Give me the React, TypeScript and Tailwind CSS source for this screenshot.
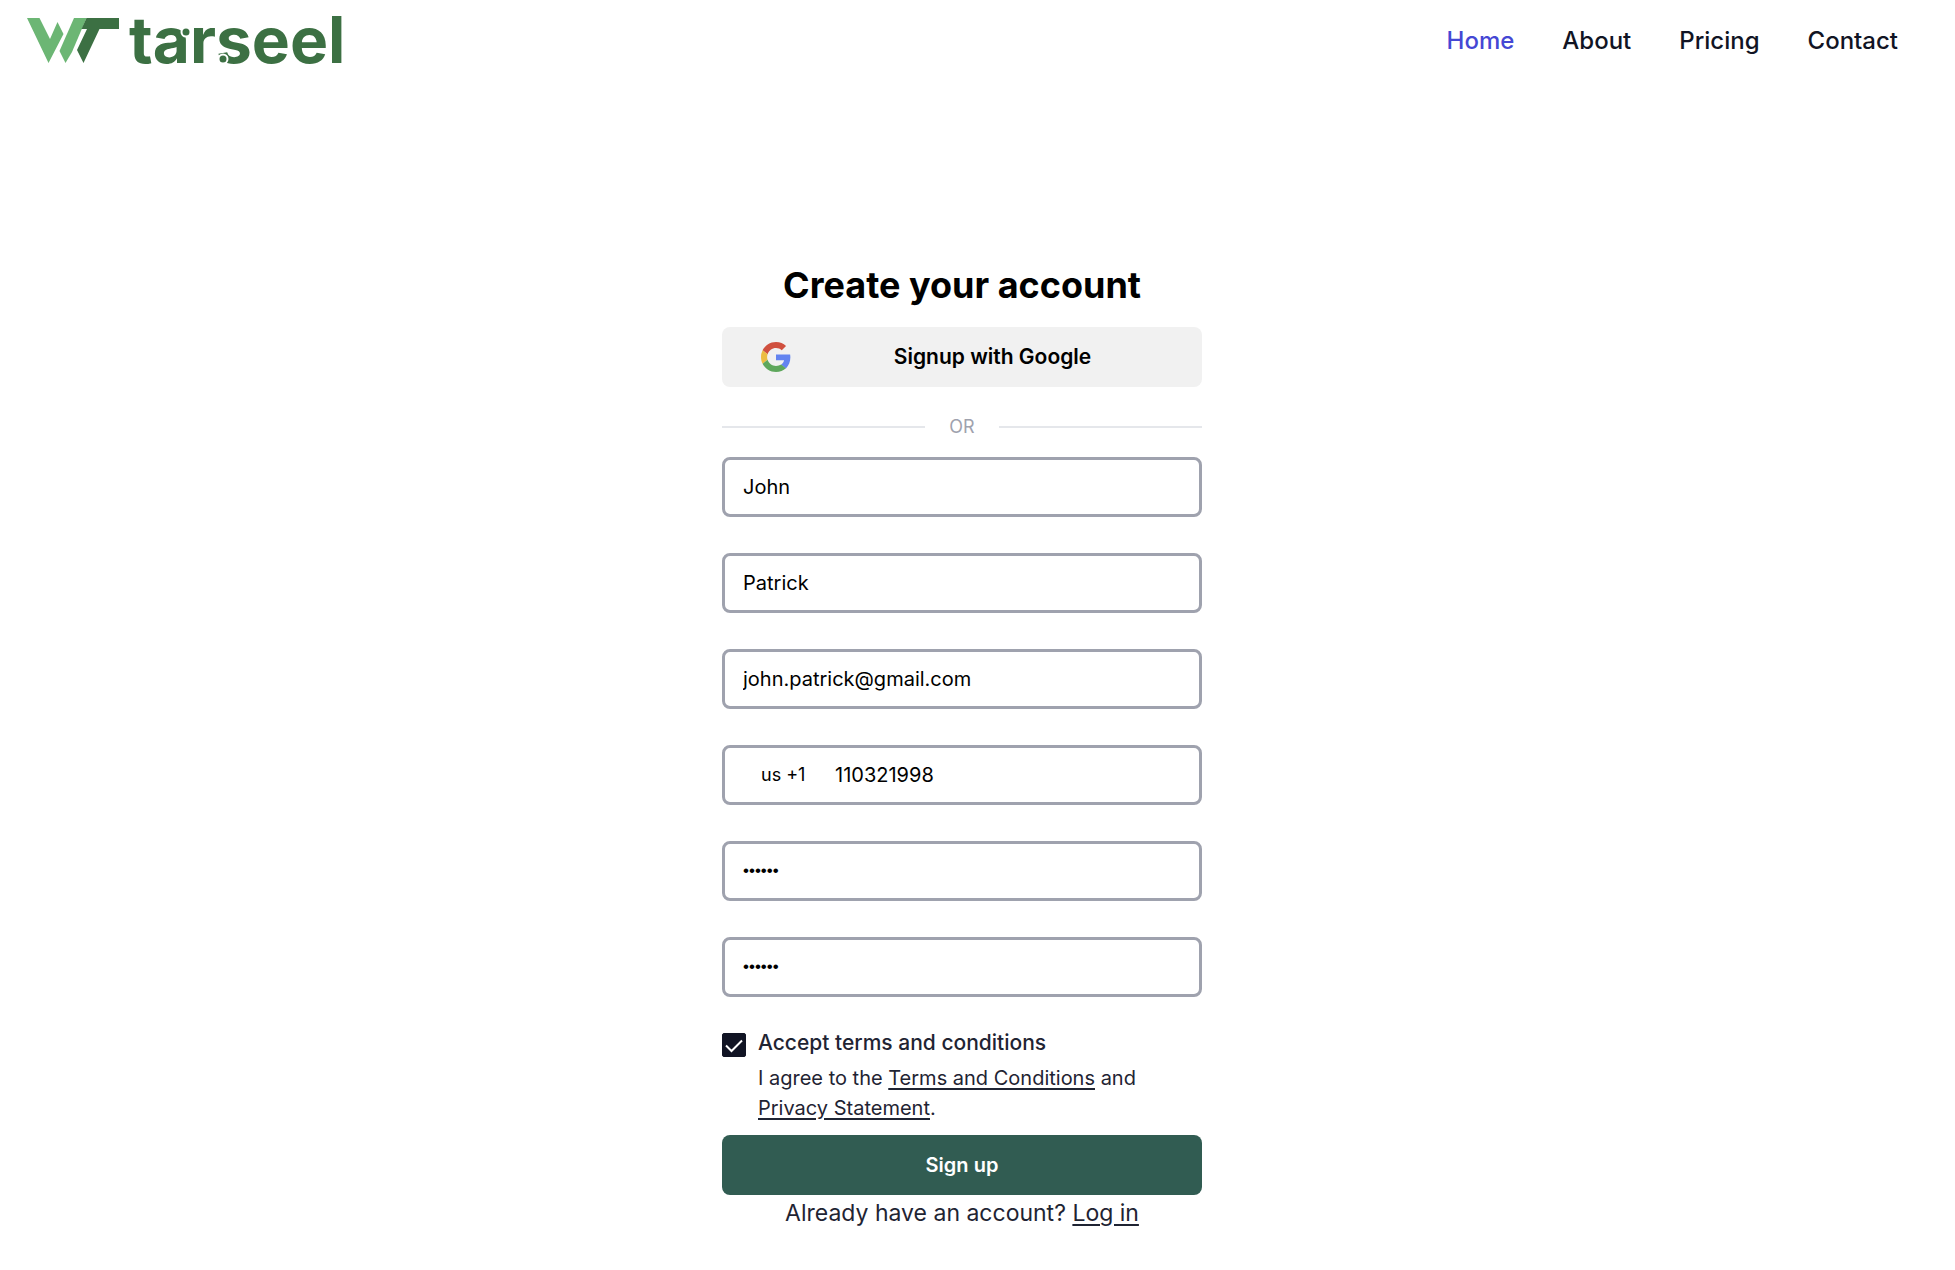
import { useState } from "react";
import type { ComponentProps, ReactNode } from "react";

const NAV = ["Home", "About", "Pricing", "Contact"];

const FIELD_BOX = "h-[60px] w-full rounded-lg border-3 border-[#9fa2ae] bg-white text-black";
const LINK = "underline decoration-2 underline-offset-3";

function Logo() {
  return (
    <svg viewBox="0 -18 330 82" className="h-[82px] w-[330px]" role="img" aria-label="tarseel">
      <path fill="#6cb674" d="M0 0h12.500l10.500 21 7.500-17 6 12L21.500 45z" />
      <path fill="#6cb674" d="M47 0h12.500L45 34l-6.500 11-6-12z" />
      <path fill="#3c7043" d="M59.500 0H92v11H72.500L56.500 45 50 32 60 11h-5.500z" />
      <text x="102" y="45" fill="#3c7043" className="font-[Inter] text-[64px] font-bold">
        tarseel
      </text>
      <circle cx="159" cy="14" r="4.500" fill="#3c7043" stroke="#fff" strokeWidth="2" />
      <circle cx="196" cy="41" r="4.500" fill="#3c7043" stroke="#fff" strokeWidth="2" />
    </svg>
  );
}

function GoogleMark() {
  return (
    <svg viewBox="0 0 48 48" className="size-[30px]" aria-hidden="true">
      <path fill="#d0503f" d="M24 9.500c3.540 0 6.710 1.220 9.210 3.600l6.850-6.850C35.900 2.380 30.470 0 24 0 14.620 0 6.510 5.380 2.560 13.220l7.980 6.190C12.430 13.720 17.740 9.500 24 9.500z" />
      <path fill="#6384f0" d="M46.980 24.550c0-1.570-.15-3.090-.38-4.550H24v9.020h12.940c-.58 2.960-2.260 5.480-4.780 7.180l7.730 6c4.510-4.180 7.090-10.360 7.090-17.650z" />
      <path fill="#ecbd41" d="M10.530 28.590A14.500 14.500 0 0 1 9.770 24c0-1.600.27-3.140.76-4.590l-7.980-6.190A23.900 23.900 0 0 0 0 24c0 3.880.92 7.540 2.560 10.780z" />
      <path fill="#5ea75c" d="M24 48c6.480 0 11.930-2.130 15.890-5.810l-7.730-6c-2.150 1.450-4.920 2.300-8.160 2.300-6.260 0-11.570-4.220-13.470-9.910l-7.980 6.190C6.510 42.620 14.620 48 24 48z" />
    </svg>
  );
}

function Field({ label, ...props }: { label: string } & ComponentProps<"input">) {
  const text = props.type === "password" ? "font-[Liberation_Sans] text-[17px]" : "text-xl";
  return <input {...props} aria-label={label} className={`${FIELD_BOX} px-[18px] ${text}`} />;
}

function Divider({ children }: { children: ReactNode }) {
  return (
    <div className="mt-[25px] mb-[15px] flex h-[30px] items-center gap-6 text-lg text-[#9fa2ae]">
      <span className="h-0.5 flex-1 bg-gray-200" />
      {children}
      <span className="h-0.5 flex-1 bg-gray-200" />
    </div>
  );
}

export default function App() {
  const [accepted, setAccepted] = useState(true);

  return (
    <div className="bg-white pr-[31px] font-[Inter,sans-serif] text-[#1f2433]">
      <header className="flex items-center justify-between pr-[26px] pl-[27px]">
        <a href="#home">
          <Logo />
        </a>
        <nav className="flex gap-12 text-2xl font-medium text-[#111424]">
          {NAV.map((item) => (
            <a key={item} href={`#${item.toLowerCase()}`} className={item === "Home" ? "text-[#4547d4]" : ""}>
              {item}
            </a>
          ))}
        </nav>
      </header>

      <main className="mx-auto mt-[179px] w-full max-w-[480px]">
        <h1 className="mb-[18px] text-center text-4xl leading-12 font-bold text-black">Create your account</h1>

        <button type="button" className="grid h-[60px] w-full grid-cols-[30px_1fr] items-center rounded-lg bg-[#f1f1f1] pr-10 pl-[39px] text-[21px] font-semibold text-black">
          <GoogleMark />
          <span className="pl-8">Signup with Google</span>
        </button>

        <Divider>OR</Divider>

        <form onSubmit={(event) => event.preventDefault()}>
          <div className="flex flex-col gap-9">
            <Field label="First name" type="text" defaultValue="John" />
            <Field label="Last name" type="text" defaultValue="Patrick" />
            <Field label="Email" type="email" defaultValue="john.patrick@gmail.com" />
            <div className={`${FIELD_BOX} flex items-center pr-[18px] pl-9`}>
              <select aria-label="Country code" className="w-[74px] appearance-none bg-transparent text-lg">
                <option>us +1</option>
              </select>
              <input aria-label="Phone number" type="tel" defaultValue="110321998" className="min-w-0 flex-1 bg-transparent text-xl" />
            </div>
            <Field label="Password" type="password" defaultValue="secret" />
            <Field label="Confirm password" type="password" defaultValue="secret" />
          </div>

          <div className="mt-9 flex gap-3">
            <span className="relative size-6 shrink-0">
              <input
                id="terms"
                type="checkbox"
                checked={accepted}
                onChange={(event) => setAccepted(event.target.checked)}
                className="peer block size-6 appearance-none rounded-xs border border-[#111424] checked:bg-[#111424]"
              />
              <svg viewBox="0 0 24 24" className="pointer-events-none absolute inset-0 hidden size-6 peer-checked:block" aria-hidden="true">
                <path d="M4 12.500l5.500 5.500L20 7.500" fill="none" stroke="#fff" strokeWidth="2" />
              </svg>
            </span>
            <div>
              <label htmlFor="terms" className="block text-[21px] leading-5 font-medium">
                Accept terms and conditions
              </label>
              <p className="mt-2.5 text-xl leading-[30px]">
                I agree to the <a href="#terms-page" className={LINK}>Terms and Conditions</a> and{" "}
                <a href="#privacy" className={LINK}>Privacy Statement</a>.
              </p>
            </div>
          </div>

          <button type="submit" className="mt-3 h-[60px] w-full rounded-lg bg-[#315c52] text-xl font-semibold text-white">
            Sign up
          </button>
        </form>

        <p className="text-center text-[23px] leading-9">
          Already have an account? <a href="#login" className={LINK}>Log in</a>
        </p>
      </main>
    </div>
  );
}
